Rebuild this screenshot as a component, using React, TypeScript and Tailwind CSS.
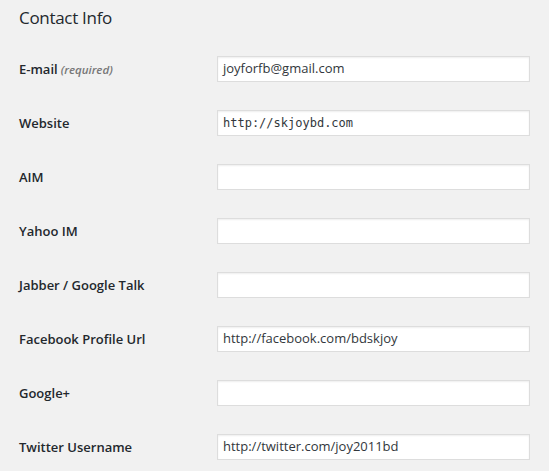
import React from "react";

const rows: { label: string; req?: boolean; value: string; mono?: boolean }[] = [
  { label: "E-mail", req: true, value: "joyforfb@gmail.com" },
  { label: "Website", value: "http://skjoybd.com", mono: true },
  { label: "AIM", value: "" },
  { label: "Yahoo IM", value: "" },
  { label: "Jabber / Google Talk", value: "" },
  { label: "Facebook Profile Url", value: "http://facebook.com/bdskjoy" },
  { label: "Google+", value: "" },
  { label: "Twitter Username", value: "http://twitter.com/joy2011bd" },
];

export default function App() {
  return (
    <div
      className="w-[549px] h-[471px] bg-[#f1f1f1] pl-[19px] overflow-hidden text-[#23282d]"
      style={{ fontFamily: '"Open Sans", sans-serif' }}
    >
      <h3 className="h-[42px] pt-[7px] text-[17px] leading-[22px] font-medium tracking-[-0.3px] text-[#23282d]">
        Contact Info
      </h3>
      {rows.map((r) => (
        <div key={r.label} className="flex items-center h-[54px]">
          <div className="w-[198px] text-[13px] font-semibold leading-[18px]">
            {r.label}
            {r.req && (
              <span className="italic text-[11.5px] text-[#777] font-semibold"> (required)</span>
            )}
          </div>
          <div
            className={
              "w-[313px] h-[26px] bg-white border border-[#ddd] shadow-[inset_0_1px_2px_rgba(0,0,0,0.07)] flex items-center pl-[5px] text-[#32373c] " +
              (r.mono ? "text-[12px]" : "text-[13px]")
            }
            style={r.mono ? { fontFamily: '"DejaVu Sans Mono", monospace' } : undefined}
          >
            {r.value}
          </div>
        </div>
      ))}
    </div>
  );
}
